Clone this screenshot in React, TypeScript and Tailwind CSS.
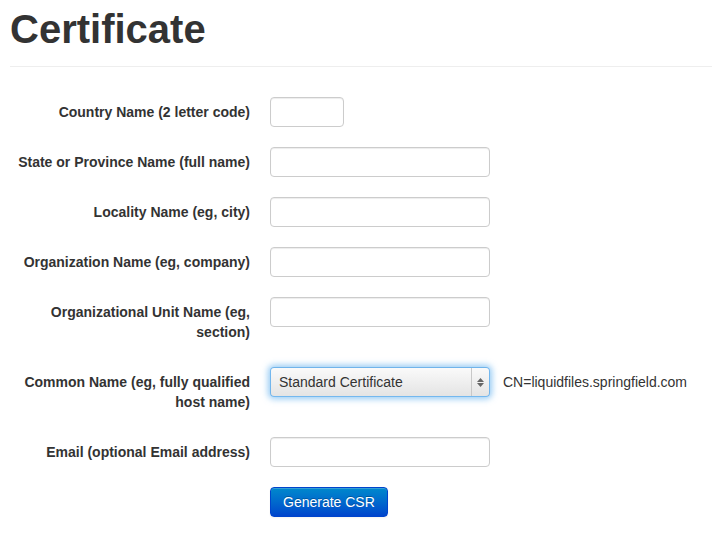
import type React from "react"

const fields: { label: string; short?: boolean }[] = [
  { label: "Country Name (2 letter code)", short: true },
  { label: "State or Province Name (full name)" },
  { label: "Locality Name (eg, city)" },
  { label: "Organization Name (eg, company)" },
  { label: "Organizational Unit Name (eg, section)" },
]

function Row({ label, children }: { label: string; children: React.ReactNode }) {
  return (
    <div className="flex items-start mb-5">
      <label className="w-[240px] shrink-0 text-right text-sm font-bold leading-5 py-[5px] text-[#333]">{label}</label>
      <div className="ml-5 flex items-start">{children}</div>
    </div>
  )
}

function TextInput({ short = false }: { short?: boolean }) {
  return (
    <div
      className={`${short ? "w-[74px]" : "w-[220px]"} h-[30px] rounded-[4px] border border-[#ccc] bg-white shadow-[inset_0_1px_1px_rgba(0,0,0,0.075)]`}
    />
  )
}

export default function App() {
  return (
    <div className="min-h-screen bg-white text-[#333]" style={{ fontFamily: '"Liberation Sans", Arial, sans-serif' }}>
      <div className="pl-[10px]">
        <h1 className="pt-[9px] text-[40px] leading-10 font-bold">Certificate</h1>
        <div className="mt-[17px] h-px bg-[#eee]" />
      </div>

      <form className="pt-[30px] pl-[10px]">
        {fields.map((f) => (
          <Row key={f.label} label={f.label}>
            <TextInput short={f.short} />
          </Row>
        ))}

        <Row label="Common Name (eg, fully qualified host name)">
          <div className="relative w-[220px] h-[30px] rounded-[4px] border border-[rgba(82,168,236,0.8)] bg-gradient-to-b from-[#fafafa] to-[#e4e4e4] shadow-[0_0_6px_2px_rgba(82,168,236,0.6)] flex items-center">
            <span className="flex-1 pl-2 text-sm text-[#333]">Standard Certificate</span>
            <div className="h-full w-[18px] border-l border-[#c8c8c8] flex flex-col items-center justify-center gap-[1px]">
              <svg width="7" height="4" viewBox="0 0 7 4">
                <path d="M3.5 0 L7 4 L0 4 Z" fill="#666" />
              </svg>
              <svg width="7" height="4" viewBox="0 0 7 4">
                <path d="M0 0 L7 0 L3.5 4 Z" fill="#666" />
              </svg>
            </div>
          </div>
          <span className="ml-[13px] pt-[5px] text-sm leading-5 text-[#333]">CN=liquidfiles.springfield.com</span>
        </Row>

        <Row label="Email (optional Email address)">
          <TextInput />
        </Row>

        <div className="ml-[260px]">
          <button
            type="button"
            className="h-[30px] px-3 rounded-[4px] border border-[#0044cc] bg-gradient-to-b from-[#0088cc] to-[#0044cc] text-sm text-white [text-shadow:0_-1px_0_rgba(0,0,0,0.25)] shadow-[inset_0_1px_0_rgba(255,255,255,0.2),0_1px_2px_rgba(0,0,0,0.05)]"
          >
            Generate CSR
          </button>
        </div>
      </form>
    </div>
  )
}
